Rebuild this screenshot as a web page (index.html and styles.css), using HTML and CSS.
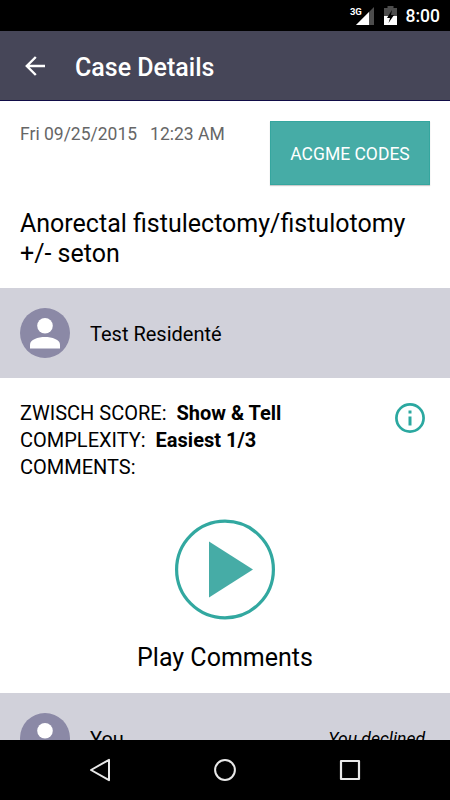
FILE: index.html
```html
<!DOCTYPE html>
<html lang="en">
<head>
    <meta charset="UTF-8">
    <meta name="viewport" content="width=device-width, initial-scale=1.0">
    <title>Case Details</title>
    <link rel="stylesheet" href="styles.css">
</head>
<body>

<div class="phone">
    <div class="status-bar">
        <span class="network">3G</span>
        <svg class="signal" width="18" height="18" viewBox="0 0 18 18">
            <path d="M0 18L18 0V18Z" fill="#4d4d4d"/>
            <path d="M0 18L13 5V18Z" fill="#fff"/>
        </svg>
        <svg class="battery" width="13" height="19" viewBox="0 0 13 19">
            <path d="M0 2H3.5V0H9.5V2H13V10H0Z" fill="#4d4d4d"/>
            <path d="M0 10H13V19H0Z" fill="#fff"/>
            <path d="M8 4L3 12H6L4.5 17L10 9H7Z" fill="#000"/>
        </svg>
        <span class="clock">8:00</span>
    </div>

    <header class="toolbar">
        <svg class="back" width="20" height="20" viewBox="0 0 20 20" fill="none" stroke="#fff" stroke-width="2.4">
            <path d="M20 10H2M10.8 1L1.8 10L10.8 19"/>
        </svg>
        <h1>Case Details</h1>
    </header>

    <main class="content">
        <section class="summary">
            <div class="date"><span>Fri 09/25/2015</span><span>12:23 AM</span></div>
            <button class="codes-btn">ACGME CODES</button>
        </section>
        <h2 class="procedure">Anorectal fistulectomy/fistulotomy +/- seton</h2>

        <div class="person">
            <svg class="avatar" width="50" height="50" viewBox="0 0 50 50">
                <circle cx="25" cy="25" r="25" fill="#8b89a6"/>
                <circle cx="25" cy="17.7" r="7.8" fill="#fff"/>
                <path d="M10 40.5V36.5C10 31.5 18 29 25 29S40 31.5 40 36.5V40.5Z" fill="#fff"/>
            </svg>
            <span class="name">Test Residenté</span>
        </div>

        <section class="scores">
            <div class="score-list">
                <p>ZWISCH SCORE: <b>Show &amp; Tell</b></p>
                <p>COMPLEXITY: <b>Easiest 1/3</b></p>
                <p>COMMENTS:</p>
            </div>
            <svg class="info" width="30" height="30" viewBox="0 0 30 30">
                <circle cx="15" cy="15" r="13.6" fill="none" stroke="#2ba8a0" stroke-width="2.7"/>
                <path d="M13.5 7.5H16.5V10.5H13.5ZM13.5 13.5H16.5V22.5H13.5Z" fill="#2ba8a0"/>
            </svg>
        </section>

        <section class="player">
            <svg width="100" height="101" viewBox="0 0 100 101">
                <circle cx="50" cy="50.5" r="48.4" fill="none" stroke="#32a8a0" stroke-width="3.2"/>
                <path d="M34 22.5L78 50.5L34 78.5Z" fill="#46aca6"/>
            </svg>
            <p>Play Comments</p>
        </section>

        <div class="person">
            <svg class="avatar" width="50" height="50" viewBox="0 0 50 50">
                <circle cx="25" cy="25" r="25" fill="#8b89a6"/>
                <circle cx="25" cy="17.7" r="7.8" fill="#fff"/>
                <path d="M10 40.5V36.5C10 31.5 18 29 25 29S40 31.5 40 36.5V40.5Z" fill="#fff"/>
            </svg>
            <span class="name">You</span>
            <span class="status">You declined</span>
        </div>
    </main>

    <nav class="nav-bar">
        <svg width="22" height="24" viewBox="0 0 22 24" fill="none" stroke="#e8e8e8" stroke-width="2" stroke-linejoin="round">
            <path d="M20 1.8V22.2L2 12Z"/>
        </svg>
        <svg width="22" height="24" viewBox="0 0 22 24" fill="none" stroke="#e8e8e8" stroke-width="2">
            <circle cx="11" cy="12" r="9.9"/>
        </svg>
        <svg width="22" height="24" viewBox="0 0 22 24" fill="none" stroke="#e8e8e8" stroke-width="2.2" stroke-linejoin="round">
            <path d="M2 3H20V21H2Z"/>
        </svg>
    </nav>
</div>

</body>
</html>
```
FILE: styles.css
```css
* {
    box-sizing: border-box;
}
body {
    margin: 0;
    font-family: Roboto, sans-serif;
    color: #000;
    background-color: #fff;
}
h1, h2, p {
    margin: 0;
    font-weight: 400;
}
.phone {
    display: flex;
    flex-direction: column;
    width: 450px;
    height: 800px;
    overflow: hidden;
}
.status-bar {
    display: flex;
    flex: none;
    align-items: flex-start;
    justify-content: flex-end;
    height: 31px;
    padding: 6px 10px 0 0;
    background-color: #000;
    color: #fff;
}
.network {
    font-size: 9.5px;
    font-weight: 700;
    letter-spacing: -0.2px;
    line-height: 12px;
}
.signal {
    margin: 1px 10px 0 -6px;
}
.battery {
    margin-right: 9px;
}
.clock {
    font-size: 17.5px;
    font-weight: 500;
    line-height: 21px;
}
.toolbar {
    display: flex;
    flex: none;
    align-items: center;
    height: 70px;
    padding: 1px 25px 0;
    background-color: #464658;
    border-bottom: 1px solid #110c48;
    color: #fff;
}
.toolbar h1 {
    margin-left: 30px;
    padding-top: 3px;
    font-size: 25px;
    font-weight: 500;
    line-height: 29px;
}
.content {
    flex: 1;
    min-height: 0;
    overflow: hidden;
}
.summary {
    display: flex;
    justify-content: space-between;
    padding: 20px 20px 0;
}
.date {
    display: flex;
    gap: 13px;
    padding-top: 3px;
    font-size: 17.5px;
    line-height: 21px;
    color: #666;
}
.codes-btn {
    width: 160px;
    height: 64px;
    padding: 2px 0 0;
    border: 1px solid #35a69f;
    background-color: #46aca6;
    box-shadow: 0 1px 1px #ccc;
    color: #fff;
    font-family: inherit;
    font-size: 17.5px;
}
.procedure {
    padding: 24px 20px 19px;
    font-size: 25px;
    line-height: 30px;
}
.person {
    display: flex;
    align-items: center;
    height: 90px;
    padding: 0 25px 0 20px;
    background-color: #d1d1da;
}
.name {
    margin-left: 20px;
    padding-top: 2px;
    font-size: 20px;
}
.status {
    margin-left: auto;
    padding-top: 2px;
    font-size: 17.5px;
    font-style: italic;
}
.scores {
    display: flex;
    justify-content: space-between;
    padding: 22px 25px 0 20px;
    font-size: 20px;
    line-height: 27px;
}
.score-list b {
    margin-left: 5px;
}
.info {
    margin-top: 3px;
}
.player {
    display: flex;
    flex-direction: column;
    align-items: center;
    height: 212px;
    padding-top: 38px;
}
.player p {
    margin-top: 23px;
    font-size: 25px;
    line-height: 30px;
}
.nav-bar {
    display: flex;
    flex: none;
    align-items: center;
    justify-content: center;
    gap: 103px;
    height: 60px;
    background-color: #000;
}
```
